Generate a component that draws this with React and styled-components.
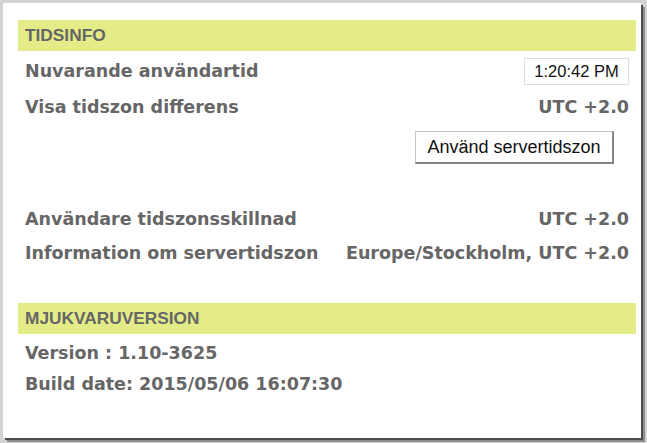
import React from 'react';
import styled, { createGlobalStyle } from 'styled-components';

const GlobalStyle = createGlobalStyle`
  html, body {
    margin: 0;
    padding: 0;
    background: #d4d4d4;
    width: 647px;
    height: 443px;
    overflow: hidden;
  }
`;

const Panel = styled.div`
  margin: 3px 0 0 3px;
  width: 638px;
  height: 435px;
  box-sizing: border-box;
  background: #fff;
  padding: 17px 5px 0 15px;
  box-shadow: 2px 2px 0 #4f4f4f, 4px 4px 0 #8c8c8c;
  display: flex;
  flex-direction: column;
`;

const SectionHeader = styled.div`
  height: 31px;
  background: #e4ec88;
  display: flex;
  align-items: center;
  padding: 0 7px;
  margin-top: ${p => p.$top || 0}px;
  font-family: 'Liberation Sans', Arial, sans-serif;
  font-weight: bold;
  font-size: 17.3px;
  color: #666;
`;

const Row = styled.div`
  height: ${p => p.$h || 36}px;
  margin-top: ${p => p.$top || 0}px;
  padding: 0 7px;
  display: flex;
  align-items: center;
  justify-content: space-between;
  font-family: 'DejaVu Sans', Verdana, sans-serif;
  font-weight: bold;
  font-size: 17.5px;
  color: #666;
  white-space: nowrap;
`;

const TimeBox = styled.div`
  width: 105px;
  height: 27px;
  box-sizing: border-box;
  border: 1px solid #dedede;
  display: flex;
  align-items: center;
  justify-content: center;
  font-family: 'Liberation Sans', Arial, sans-serif;
  font-weight: normal;
  font-size: 16.5px;
  color: #111;
`;

const ButtonRow = styled.div`
  display: flex;
  justify-content: flex-end;
  padding-right: 22px;
  margin-top: 6px;
`;

const Button = styled.button`
  width: 199px;
  height: 33px;
  box-sizing: border-box;
  background: #fff;
  border: 1px solid #c4c4c4;
  border-right: 2px solid #858585;
  border-bottom: 2px solid #858585;
  font-family: 'Liberation Sans', Arial, sans-serif;
  font-size: 18px;
  color: #111;
  padding: 0;
`;

export default function App() {
  return (
    <>
      <GlobalStyle />
      <Panel>
        <SectionHeader>TIDSINFO</SectionHeader>
        <Row $top={2}>
          <span>Nuvarande användartid</span>
          <TimeBox>1:20:42 PM</TimeBox>
        </Row>
        <Row>
          <span>Visa tidszon differens</span>
          <span>UTC +2.0</span>
        </Row>
        <ButtonRow>
          <Button>Använd servertidszon</Button>
        </ButtonRow>
        <Row $h={34} $top={38}>
          <span>Användare tidszonsskillnad</span>
          <span>UTC +2.0</span>
        </Row>
        <Row $h={34}>
          <span>Information om servertidszon</span>
          <span>Europe/Stockholm, UTC +2.0</span>
        </Row>
        <SectionHeader $top={33}>MJUKVARUVERSION</SectionHeader>
        <Row $h={31} $top={3}>
          <span>Version : 1.10-3625</span>
        </Row>
        <Row $h={31}>
          <span>Build date: 2015/05/06 16:07:30</span>
        </Row>
      </Panel>
    </>
  );
}
